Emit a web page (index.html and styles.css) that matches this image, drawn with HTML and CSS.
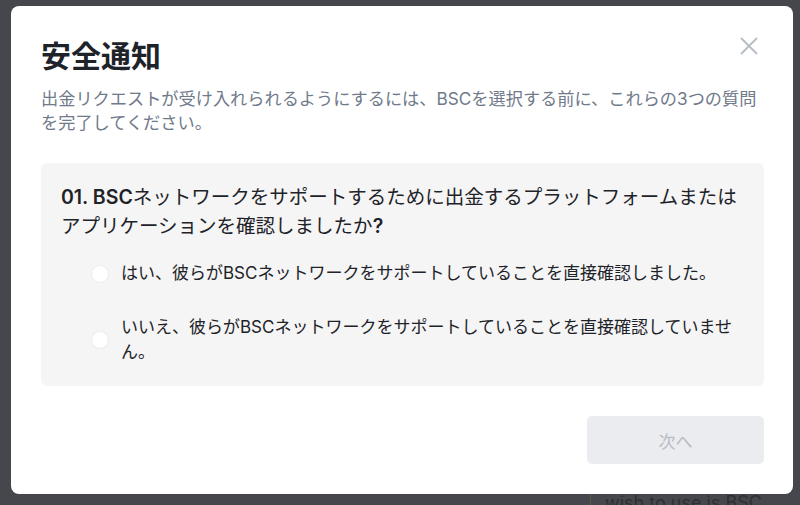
FILE: index.html
```html
<!DOCTYPE html>
<html lang="ja">
<head>
<meta charset="utf-8">
<title>安全通知</title>
<link rel="stylesheet" href="styles.css">
</head>
<body>
<div class="page">
  <div class="modal">
    <button class="close" aria-label="close">
      <svg width="18" height="18" viewBox="0 0 18 18"><path d="M1 1L17 17M17 1L1 17" stroke="#b7bdc6" stroke-width="1.8" fill="none"/></svg>
    </button>
    <h1 class="title">安全通知</h1>
    <p class="subtitle">出金リクエストが受け入れられるようにするには、BSCを選択する前に、これらの3つの質問を完了してください。</p>
    <div class="question-box">
      <p class="question"><span class="strong">01. BSC</span>ネットワークをサポートするために出金するプラットフォームまたはアプリケーションを確認しましたか<span class="strong">?</span></p>
      <div class="options">
        <label class="option"><span class="radio"></span><span class="option-text">はい、彼らがBSCネットワークをサポートしていることを直接確認しました。</span></label>
        <label class="option"><span class="radio"></span><span class="option-text">いいえ、彼らがBSCネットワークをサポートしていることを直接確認していません。</span></label>
      </div>
    </div>
    <div class="actions">
      <button class="next" disabled>次へ</button>
    </div>
  </div>
  <div class="peek">wish to use is BSC</div>
</div>
</body>
</html>
```
FILE: styles.css
```css
html, body {
  margin: 0;
  padding: 0;
  height: 100%;
  overflow: hidden;
  background: #46474c;
}
body {
  font-family: "Inter", "Noto Sans CJK JP", sans-serif;
}
.page {
  padding: 6px 0 0 11px;
}
.modal {
  position: relative;
  box-sizing: border-box;
  width: 782px;
  height: 488px;
  background: #ffffff;
  border-radius: 8px;
  padding: 32px 29px 30px 30px;
}
.close {
  position: absolute;
  top: 31px;
  right: 35px;
  width: 18px;
  height: 18px;
  padding: 0;
  border: 0;
  background: none;
  display: flex;
}
.title {
  margin: 0;
  font-size: 30px;
  line-height: 37px;
  font-weight: 700;
  color: #1e2329;
}
.subtitle {
  margin: 12px 0 0;
  font-size: 17.2px;
  line-height: 24px;
  color: #707a8a;
}
.question-box {
  margin-top: 28px;
  background: #f5f5f5;
  border-radius: 6px;
  padding: 20px 20px 21px 20px;
}
.question {
  margin: 0;
  font-size: 19.5px;
  line-height: 29px;
  color: #1e2329;
}
.strong {
  font-weight: 600;
}
.options {
  margin-top: 20px;
  padding-left: 30px;
  display: flex;
  flex-direction: column;
  gap: 29px;
}
.option {
  display: flex;
  align-items: center;
  gap: 12px;
}
.radio {
  flex: none;
  box-sizing: border-box;
  width: 18px;
  height: 18px;
  border-radius: 50%;
  background: #ffffff;
  border: 1px solid #eaecef;
}
.option-text {
  font-size: 17px;
  line-height: 25px;
  color: #1e2329;
}
.actions {
  margin-top: 30px;
  display: flex;
  justify-content: flex-end;
}
.next {
  width: 177px;
  height: 48px;
  border: 0;
  border-radius: 5px;
  background: #eaecef;
  color: #b7bdc6;
  font-family: "Inter", "Noto Sans CJK JP", sans-serif;
  font-size: 17px;
}
.peek {
  margin-left: 579px;
  border-left: 1px solid #5a564a;
  padding-left: 14px;
  height: 20px;
  font-size: 18px;
  line-height: 18px;
  color: #2e2f33;
}
```
